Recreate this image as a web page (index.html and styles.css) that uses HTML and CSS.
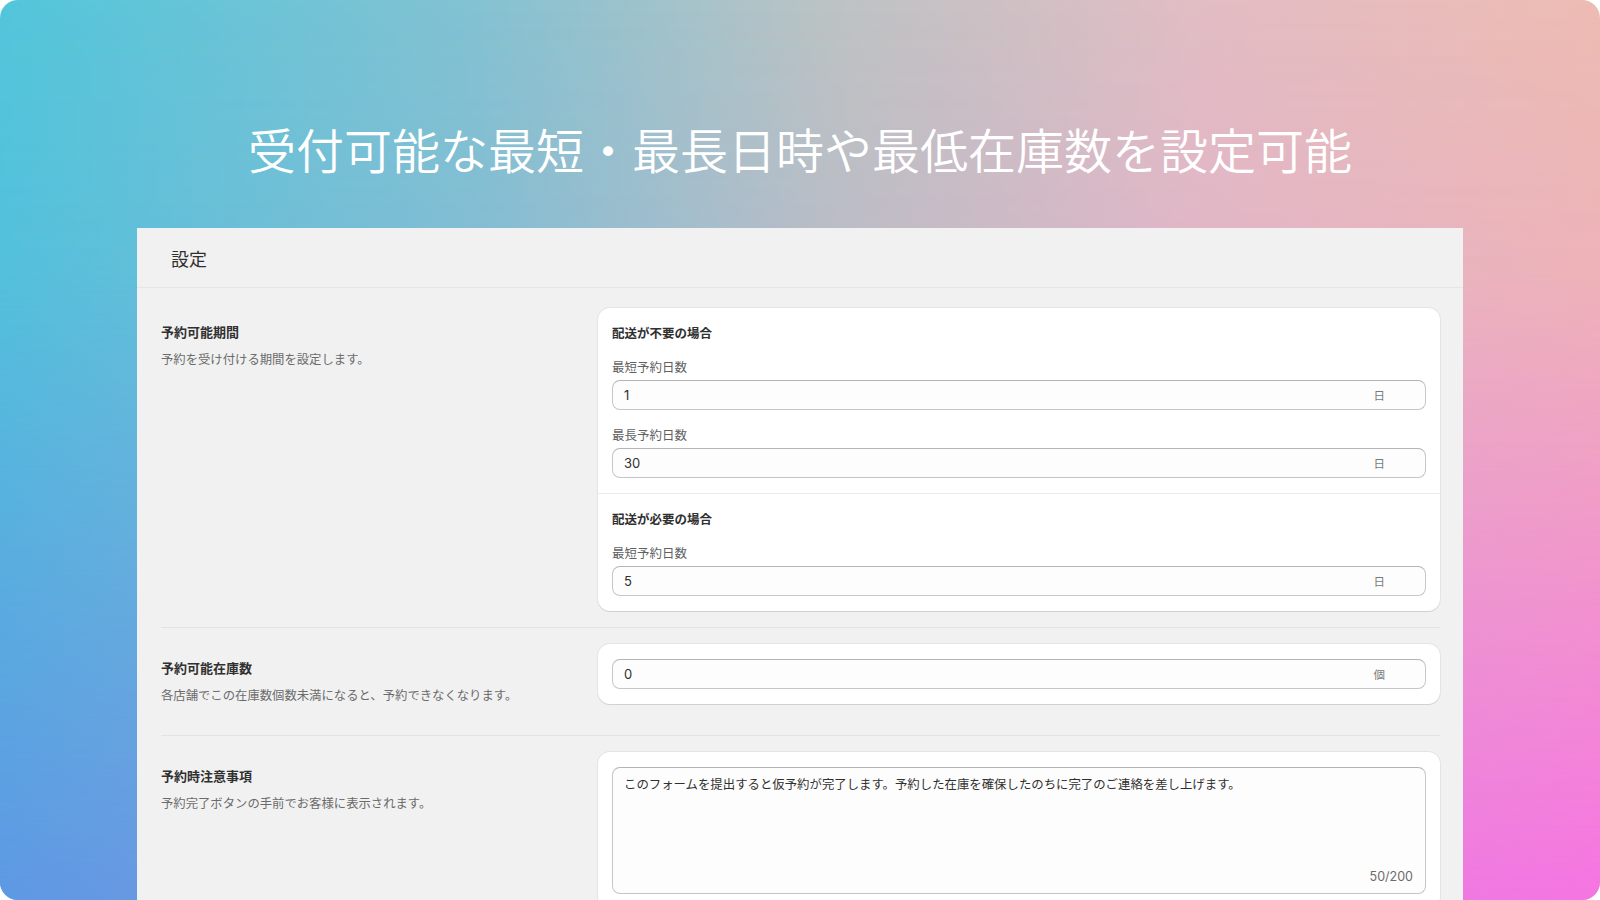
FILE: index.html
```html
<!DOCTYPE html>
<html lang="ja">
<head>
<meta charset="utf-8">
<title>設定</title>
<link rel="stylesheet" href="styles.css">
</head>
<body>
<div class="frame">
  <header class="hero">
    <h1 class="hero-title">受付可能な最短・最長日時や最低在庫数を設定可能</h1>
  </header>
  <main class="panel">
    <div class="panel-header">
      <h2 class="panel-title">設定</h2>
    </div>
    <div class="panel-body">
      <section class="row">
        <div class="annotation">
          <h3 class="annotation-title">予約可能期間</h3>
          <p class="annotation-desc">予約を受け付ける期間を設定します。</p>
        </div>
        <div class="card">
          <div class="card-section">
            <h4 class="card-heading">配送が不要の場合</h4>
            <div class="fields">
              <div class="field">
                <label class="field-label">最短予約日数</label>
                <div class="input"><span class="input-value">1</span><span class="input-suffix">日</span></div>
              </div>
              <div class="field">
                <label class="field-label">最長予約日数</label>
                <div class="input"><span class="input-value">30</span><span class="input-suffix">日</span></div>
              </div>
            </div>
          </div>
          <div class="card-section">
            <h4 class="card-heading">配送が必要の場合</h4>
            <div class="fields">
              <div class="field">
                <label class="field-label">最短予約日数</label>
                <div class="input"><span class="input-value">5</span><span class="input-suffix">日</span></div>
              </div>
            </div>
          </div>
        </div>
      </section>
      <section class="row">
        <div class="annotation">
          <h3 class="annotation-title">予約可能在庫数</h3>
          <p class="annotation-desc">各店舗でこの在庫数個数未満になると、予約できなくなります。</p>
        </div>
        <div class="card">
          <div class="card-section">
            <div class="input"><span class="input-value">0</span><span class="input-suffix">個</span></div>
          </div>
        </div>
      </section>
      <section class="row">
        <div class="annotation">
          <h3 class="annotation-title">予約時注意事項</h3>
          <p class="annotation-desc">予約完了ボタンの手前でお客様に表示されます。</p>
        </div>
        <div class="card">
          <div class="card-section">
            <div class="textarea">
              <p class="textarea-text">このフォームを提出すると仮予約が完了します。予約した在庫を確保したのちに完了のご連絡を差し上げます。</p>
              <span class="textarea-count">50/200</span>
            </div>
          </div>
        </div>
      </section>
    </div>
  </main>
</div>
</body>
</html>
```

FILE: styles.css
```css
* {
  box-sizing: border-box;
}

html, body {
  margin: 0;
  padding: 0;
  background: #ffffff;
}

body {
  font-family: "Inter", "Noto Sans CJK JP", sans-serif;
  color: #303030;
}

.frame {
  position: relative;
  width: 1600px;
  height: 900px;
  overflow: hidden;
  border-radius: 18px;
  background: linear-gradient(to right, #52c6db 0%, #84c2d2 30%, #bcc3c4 52%, #e2bdc4 75%, #edbcb3 100%);
  display: flex;
  flex-direction: column;
}

.frame::before {
  content: "";
  position: absolute;
  inset: 0;
  background: linear-gradient(to right, #5e98e3 0%, #7f98e0 30%, #b98adc 55%, #e67ee0 78%, #f574e2 100%);
  -webkit-mask-image: linear-gradient(to bottom, transparent 0%, rgba(0,0,0,0.12) 30%, #000 100%);
  mask-image: linear-gradient(to bottom, transparent 0%, rgba(0,0,0,0.12) 30%, #000 100%);
}

.hero {
  position: relative;
  height: 228px;
  padding-top: 114px;
  flex: none;
}

.hero-title {
  margin: 0;
  text-align: center;
  font-family: "Noto Sans CJK JP", sans-serif;
  font-weight: 350;
  font-size: 48px;
  line-height: 68px;
  color: #ffffff;
  letter-spacing: 0;
}

.panel {
  position: relative;
  flex: 1;
  margin: 0 137px;
  background: #f1f1f1;
}

.panel-header {
  height: 60px;
  border-bottom: 1px solid #e6e6e6;
  padding-left: 34px;
  display: flex;
  align-items: center;
}

.panel-title {
  margin: 0;
  font-family: "Noto Sans CJK JP", sans-serif;
  font-weight: 400;
  font-size: 18px;
  line-height: 24px;
  color: #303030;
}

.panel-body {
  padding: 0 23px 0 24px;
}

.row {
  display: grid;
  grid-template-columns: 1fr 2fr;
  column-gap: 16px;
  align-items: start;
  padding: 16px 0;
}

.row:first-child {
  padding-top: 20px;
}

.row + .row {
  border-top: 1px solid #e3e3e3;
}

.annotation {
  padding: 14px 0;
}

.annotation-title {
  margin: 0;
  font-family: "Noto Sans CJK JP", sans-serif;
  font-size: 13px;
  line-height: 20px;
  font-weight: 700;
  color: #303030;
}

.annotation-desc {
  margin: 7px 0 0;
  font-family: "Noto Sans CJK JP", sans-serif;
  font-size: 12.35px;
  line-height: 20px;
  color: #6b6b6b;
}

.card {
  background: #ffffff;
  border-radius: 12px;
  box-shadow: 0 0 0 1px rgba(0, 0, 0, 0.05), 0 1px 0 0 rgba(26, 26, 26, 0.09);
  overflow: hidden;
}

.card-section {
  padding: 15px 14px;
}

.card-section + .card-section {
  border-top: 1px solid #ebebeb;
}

.card-heading {
  margin: 0 0 14px;
  font-family: "Noto Sans CJK JP", sans-serif;
  font-size: 12.5px;
  line-height: 20px;
  font-weight: 700;
  color: #303030;
}

.fields {
  display: flex;
  flex-direction: column;
  gap: 15px;
}

.field-label {
  display: block;
  margin-bottom: 3px;
  font-family: "Noto Sans CJK JP", sans-serif;
  font-size: 12.5px;
  line-height: 20px;
  color: #616161;
}

.input {
  height: 30px;
  display: flex;
  align-items: center;
  padding: 0 12px 0 11px;
  background: #fdfdfd;
  border: 1px solid #c6c6c6;
  border-top-color: #b4b4b4;
  border-radius: 8px;
}

.input-value {
  flex: 1;
  font-size: 13px;
  line-height: 20px;
  color: #303030;
}

.input-suffix {
  margin-right: 28px;
  font-family: "Noto Sans CJK JP", sans-serif;
  font-size: 11.5px;
  line-height: 20px;
  color: #7a7a7a;
}

.textarea {
  height: 127px;
  display: flex;
  flex-direction: column;
  justify-content: space-between;
  padding: 6px 12px 6px 11px;
  background: #fdfdfd;
  border: 1px solid #c6c6c6;
  border-top-color: #b4b4b4;
  border-radius: 8px;
}

.textarea-text {
  margin: 0;
  font-family: "Noto Sans CJK JP", sans-serif;
  font-size: 12.4px;
  line-height: 20px;
  color: #303030;
}

.textarea-count {
  align-self: flex-end;
  font-size: 12.5px;
  line-height: 20px;
  color: #6b6b6b;
}
```
